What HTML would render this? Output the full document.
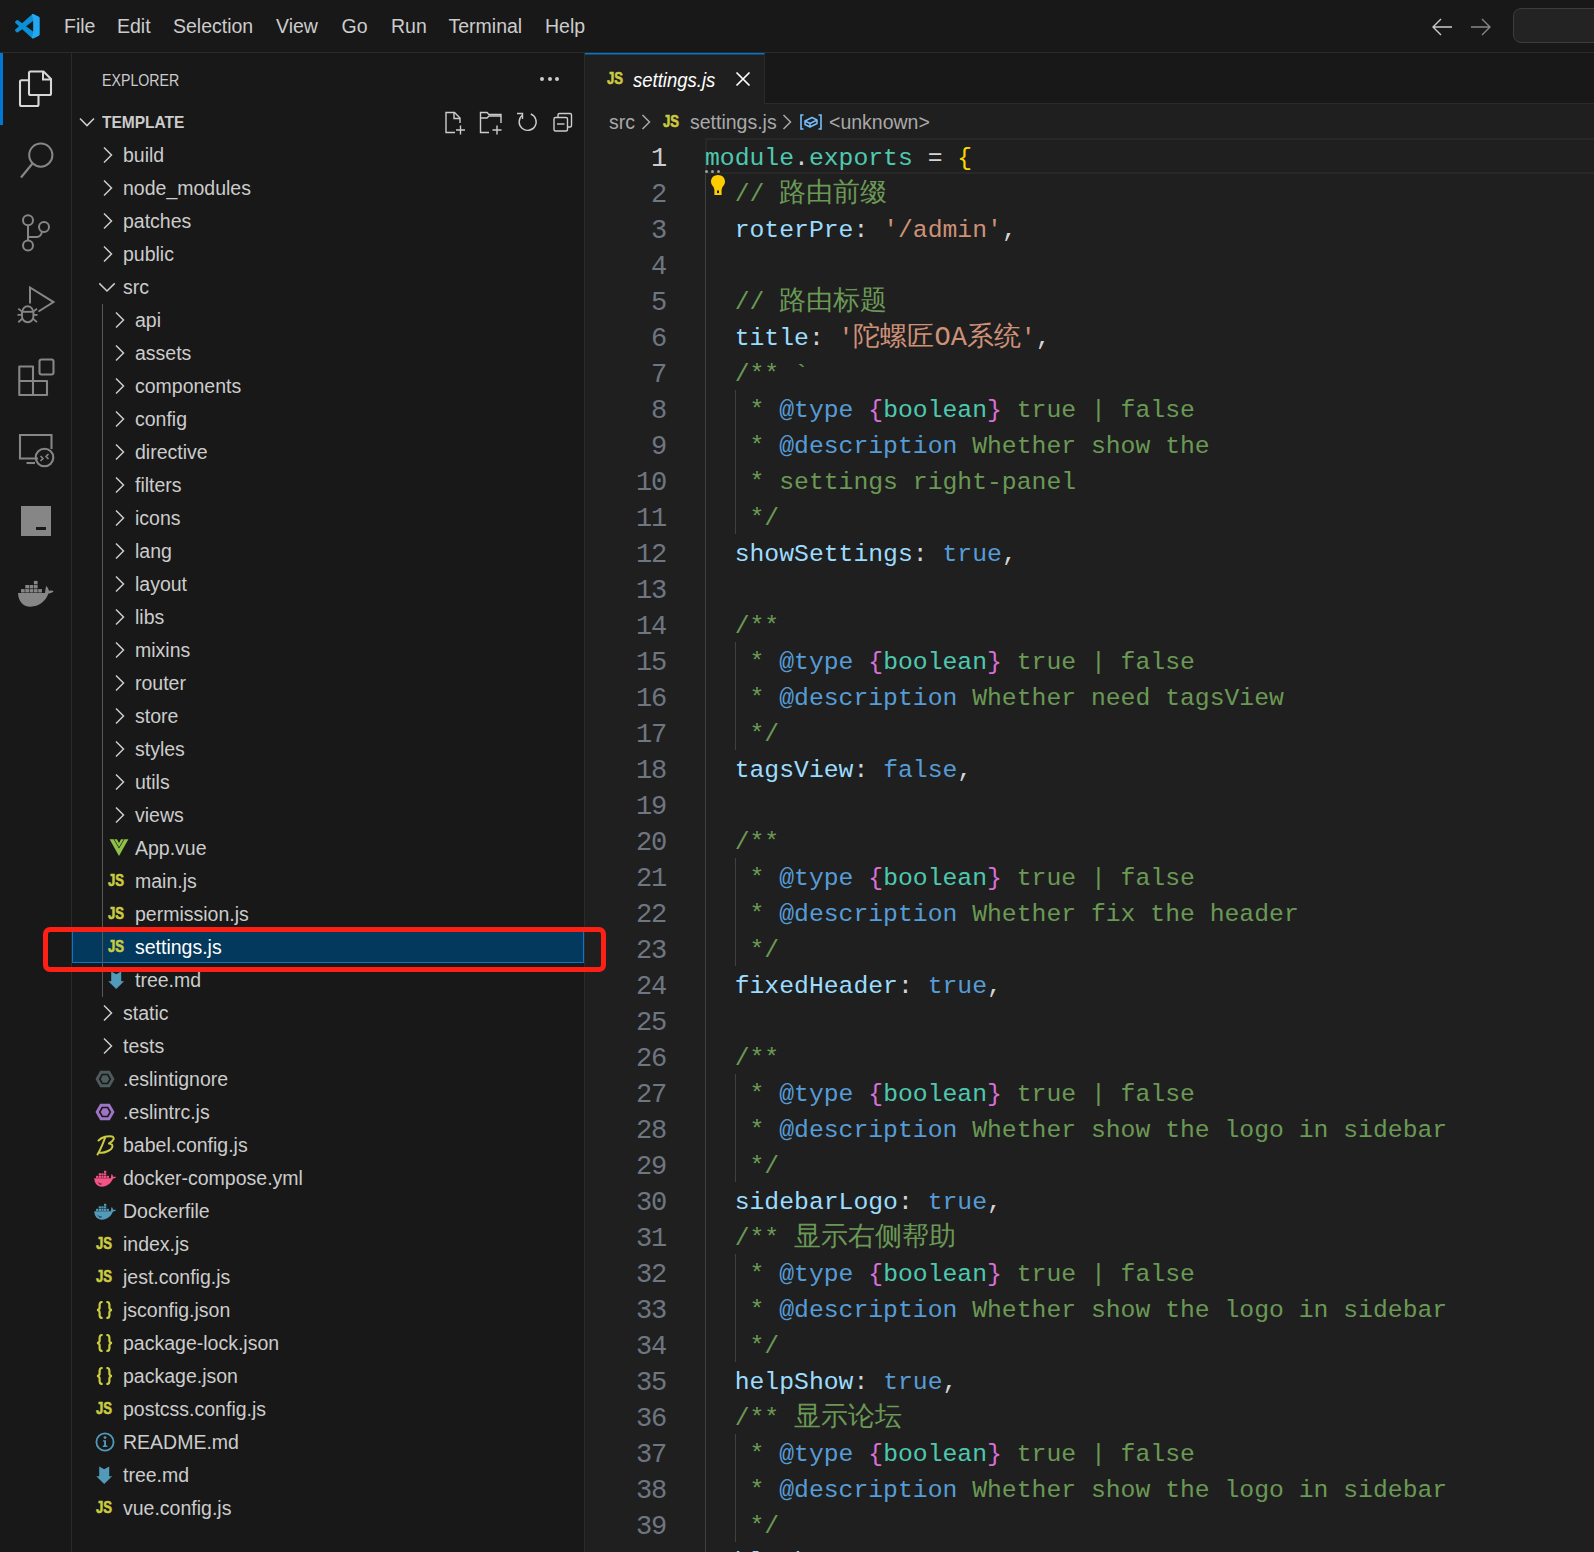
<!DOCTYPE html>
<html><head><meta charset="utf-8"><style>
*{margin:0;padding:0;box-sizing:border-box}
html,body{width:1594px;height:1552px;overflow:hidden;background:#1f1f1f;font-family:"Liberation Sans",sans-serif}
.abs,.ic,.tr,.jsi,.jsoni,.ln,.cl,.ig,.ig2,.sel,.menu{position:absolute}
#title{position:absolute;left:0;top:0;width:1594px;height:53px;background:#181818;border-bottom:1px solid #2b2b2b}
.menu{top:0;height:52px;line-height:52px;font-size:19.5px;color:#cccccc}
#act{position:absolute;left:0;top:53px;width:72px;height:1499px;background:#181818;border-right:1px solid #2b2b2b}
#side{position:absolute;left:72px;top:53px;width:513px;height:1499px;background:#181818;border-right:1px solid #2b2b2b}
#tabs{position:absolute;left:585px;top:53px;width:1009px;height:51px;background:#181818;border-bottom:1px solid #2b2b2b}
.tr{height:33px;line-height:33px;font-size:19.5px;color:#cccccc;white-space:nowrap}
.sel{left:72px;width:512px;height:33px;background:#04395e;border:1px solid #0078d4}
.sel-t{color:#ffffff}
.jsi{font-family:"Liberation Sans",sans-serif;font-weight:bold;font-size:16px;line-height:20px;color:#cbcb41;letter-spacing:0px;-webkit-text-stroke:0.6px #cbcb41;transform:scaleX(0.82);transform-origin:0 0}
.jsoni{font-family:"Liberation Mono",monospace;font-weight:bold;font-size:17px;line-height:22px;color:#cbcb41;letter-spacing:-2px}
.ln{left:600px;width:66px;text-align:right;height:36px;line-height:36px;font-family:"Liberation Mono",monospace;font-size:27px;letter-spacing:-1.2px;color:#6e7681}
.ln.act{color:#cccccc}
.cl{left:705px;height:36px;line-height:36px;font-family:"Liberation Mono",monospace;font-size:24.74px;white-space:pre;color:#d4d4d4}
.cl span{white-space:pre}
.v{color:#9cdcfe}.s{color:#ce9178}.c{color:#6a9955}.k{color:#569cd6}.t{color:#4ec9b0}.p{color:#d4d4d4}.y{color:#ffd700}.o{color:#da70d6}
.cj{color:#6a9955;font-size:27px}.sj{color:#ce9178;font-size:27px}
.ig{width:1px;background:#404040}
.ig2{width:1px;background:#404040}

.bc{color:#a9a9a9}

</style></head><body>
<div id="title"></div>
<svg class="ic" style="left:15px;top:14px" width="24.5" height="24.5" viewBox="0 0 100 100">
 <path d="M96.5 10.8 L75.9 0.9 C73.5 -0.3 70.7 0.2 68.8 2.1 L29.3 38.1 L12.1 25.1 C10.5 23.9 8.3 24 6.8 25.3 L1.3 30.3 C-0.5 32 -0.5 34.8 1.3 36.4 L16.2 50 L1.3 63.6 C-0.5 65.2 -0.5 68 1.3 69.7 L6.8 74.7 C8.3 76 10.5 76.1 12.1 74.9 L29.3 61.9 L68.8 97.9 C70.7 99.8 73.5 100.3 75.9 99.1 L96.5 89.2 C98.7 88.2 100 86 100 83.6 V16.4 C100 14 98.7 11.8 96.5 10.8 Z M75 72.7 L45 50 L75 27.3 Z" fill="#0a8fd8"/>
 <path d="M96.5 10.8 L75.9 0.9 C73.5 -0.3 70.7 0.2 68.8 2.1 L75 27.3 V72.7 L68.8 97.9 C70.7 99.8 73.5 100.3 75.9 99.1 L96.5 89.2 C98.7 88.2 100 86 100 83.6 V16.4 C100 14 98.7 11.8 96.5 10.8 Z" fill="#24a8f0"/>
</svg>
<div class="menu" style="left:64px">File</div>
<div class="menu" style="left:117px">Edit</div>
<div class="menu" style="left:173px">Selection</div>
<div class="menu" style="left:276px">View</div>
<div class="menu" style="left:341.5px">Go</div>
<div class="menu" style="left:391px">Run</div>
<div class="menu" style="left:448.5px">Terminal</div>
<div class="menu" style="left:545px">Help</div>
<!-- nav arrows -->
<svg class="ic" style="left:1430px;top:16px" width="24" height="22" viewBox="0 0 24 22">
 <path d="M11 3 L3 11 L11 19 M3 11 L22 11" fill="none" stroke="#cccccc" stroke-width="1.35"/></svg>
<svg class="ic" style="left:1469px;top:16px" width="24" height="22" viewBox="0 0 24 22">
 <path d="M13 3 L21 11 L13 19 M21 11 L2 11" fill="none" stroke="#868686" stroke-width="1.35"/></svg>
<div class="abs" style="left:1513px;top:8px;width:120px;height:35px;border:1px solid #3c3c3c;border-radius:8px;background:#232323"></div>

<div id="act"></div>
<div class="abs" style="left:0;top:53px;width:3px;height:72px;background:#0078d4"></div>
<!-- explorer icon -->
<svg class="ic" style="left:17px;top:69px" width="38" height="40" viewBox="0 0 38 40">
 <path d="M12 4 Q12 2.5 13.5 2.5 L26.5 2.5 L34 10 L34 24.5 Q34 26 32.5 26 L13.5 26 Q12 26 12 24.5 Z" fill="none" stroke="#d7d7d7" stroke-width="2.1" stroke-linejoin="round"/>
 <path d="M26 2.5 L26 10.5 L34 10.5" fill="none" stroke="#d7d7d7" stroke-width="2"/>
 <path d="M12 11.2 L4.5 11.2 Q3 11.2 3 12.7 L3 35.5 Q3 37 4.5 37 L20 37 Q21.5 37 21.5 35.5 L21.5 26" fill="none" stroke="#d7d7d7" stroke-width="2.1" stroke-linejoin="round"/>
</svg>
<!-- search -->
<svg class="ic" style="left:16px;top:138px" width="40" height="44" viewBox="0 0 40 44">
 <circle cx="24.8" cy="17.1" r="11.6" fill="none" stroke="#868686" stroke-width="2"/>
 <path d="M16.5 25.5 L5 39.5" stroke="#868686" stroke-width="2.2" stroke-linecap="butt"/>
</svg>
<!-- source control -->
<svg class="ic" style="left:16px;top:208px" width="40" height="48" viewBox="0 0 40 48">
 <circle cx="12" cy="12.2" r="5" fill="none" stroke="#868686" stroke-width="2"/>
 <circle cx="28" cy="19" r="5" fill="none" stroke="#868686" stroke-width="2"/>
 <circle cx="12" cy="37.4" r="5" fill="none" stroke="#868686" stroke-width="2"/>
 <path d="M12 17.2 L12 32.4 M12 29 L21 29 Q24.5 29 26 24" fill="none" stroke="#868686" stroke-width="2"/>
</svg>
<!-- run & debug -->
<svg class="ic" style="left:14px;top:282px" width="44" height="46" viewBox="0 0 44 46">
 <path d="M16 21.4 L16 5.5 L39.5 20.1 L24.5 29.5" fill="none" stroke="#868686" stroke-width="2" stroke-linejoin="miter"/>
 <path d="M8.4 29.6 A5.3 5.3 0 0 1 19 29.6" fill="none" stroke="#868686" stroke-width="1.9"/>
 <path d="M7.4 29.8 L20 29.8" stroke="#868686" stroke-width="1.9"/>
 <path d="M8 30 L8 34.5 A5.7 5.7 0 0 0 19.4 34.5 L19.4 30" fill="none" stroke="#868686" stroke-width="1.9"/>
 <path d="M3.5 32.8 L7.5 32.8 M20 32.8 L23.5 32.8 M4.3 26.7 L8.2 29.6 M23 26.7 L19.2 29.6 M4.3 40.2 L8.2 36.8 M23 40.2 L19.2 36.8" stroke="#868686" stroke-width="1.8"/>
</svg>
<!-- extensions -->
<svg class="ic" style="left:14px;top:354px" width="44" height="46" viewBox="0 0 44 46">
 <path d="M5.3 12.5 L19 12.5 L19 27 L33 27 L33 41 L5.3 41 Z M5.3 27 L19 27 L19 41" fill="none" stroke="#868686" stroke-width="2.1" stroke-linejoin="round"/>
 <rect x="25.5" y="5.5" width="14" height="15" rx="2" fill="none" stroke="#868686" stroke-width="2.1"/>
</svg>
<!-- remote explorer -->
<svg class="ic" style="left:14px;top:428px" width="44" height="46" viewBox="0 0 44 46">
 <path d="M24 30.5 L6 30.5 L6 7 L37.5 7 L37.5 21" fill="none" stroke="#868686" stroke-width="2.1"/>
 <path d="M12.5 35 L21 35" stroke="#868686" stroke-width="2.1"/>
 <circle cx="30.5" cy="29.5" r="8.8" fill="none" stroke="#868686" stroke-width="2.1"/>
 <path d="M26.5 28 L29 30.5 L26.5 33 M34.5 26 L32 28.5 L34.5 31" fill="none" stroke="#868686" stroke-width="1.6"/>
</svg>
<!-- square terminal thing -->
<div class="abs" style="left:21px;top:506px;width:30px;height:30px;background:#868686"></div>
<div class="abs" style="left:36px;top:527px;width:10px;height:3px;background:#181818"></div>
<!-- docker -->
<svg class="ic" style="left:16px;top:578px" width="40" height="32" viewBox="0 0 40 32">
 <path d="M2 15 L29 15 C29.3 12.5 29.5 10.2 30.3 8 C31.6 9 32.6 11 33 13 C34.6 12.3 36.5 12.4 37.8 13.1 C36.8 14.6 34.6 15.5 32.5 15.6 C29.5 23.5 23 28.7 14.5 28.7 C6.5 28.7 2.4 23 2 15 Z" fill="#868686"/>
 <rect x="5" y="11.1" width="3.7" height="3.4" fill="#868686"/><rect x="9.3" y="11.1" width="3.7" height="3.4" fill="#868686"/><rect x="13.6" y="11.1" width="3.7" height="3.4" fill="#868686"/><rect x="17.9" y="11.1" width="3.7" height="3.4" fill="#868686"/><rect x="22.2" y="11.1" width="3.7" height="3.4" fill="#868686"/><rect x="9.3" y="7" width="3.7" height="3.4" fill="#868686"/><rect x="13.6" y="7" width="3.7" height="3.4" fill="#868686"/><rect x="17.9" y="7" width="3.7" height="3.4" fill="#868686"/><rect x="17.9" y="2.9" width="3.7" height="3.4" fill="#868686"/>
</svg>

<div id="side"></div>
<div class="tr" style="left:102px;top:64px;font-size:17px;color:#cccccc;transform:scaleX(0.835);transform-origin:0 0">EXPLORER</div>
<div class="abs" style="left:540px;top:77px;width:4px;height:4px;border-radius:2px;background:#cccccc"></div>
<div class="abs" style="left:547.5px;top:77px;width:4px;height:4px;border-radius:2px;background:#cccccc"></div>
<div class="abs" style="left:555px;top:77px;width:4px;height:4px;border-radius:2px;background:#cccccc"></div>
<!-- TEMPLATE header -->
<svg class="ic" style="left:77px;top:112px" width="20" height="20" viewBox="0 0 20 20"><path d="M3 6.5 L10 13.5 L17 6.5" fill="none" stroke="#cccccc" stroke-width="1.6"/></svg>
<div class="tr" style="left:102px;top:106px;font-size:16.5px;font-weight:bold;color:#cccccc;transform:scaleX(0.94);transform-origin:0 0">TEMPLATE</div>
<!-- new file -->
<svg class="ic" style="left:443px;top:110px" width="26" height="26" viewBox="0 0 26 26">
 <path d="M12 22.5 L3 22.5 L3 2.5 L11.5 2.5 L17 8 L17 13" fill="none" stroke="#cccccc" stroke-width="1.4"/>
 <path d="M11 2.5 L11 8.5 L17 8.5" fill="none" stroke="#cccccc" stroke-width="1.4"/>
 <path d="M17.5 15.5 L17.5 24.5 M13 20 L22 20" stroke="#cccccc" stroke-width="1.4"/>
</svg>
<!-- new folder -->
<svg class="ic" style="left:478px;top:110px" width="26" height="26" viewBox="0 0 26 26">
 <path d="M11 22.5 L2.5 22.5 L2.5 2.5 L9 2.5 L11 4.5 L23 4.5 L23 13" fill="none" stroke="#cccccc" stroke-width="1.4"/>
 <path d="M2.5 8 L9 8 L11 6 L23 6" fill="none" stroke="#cccccc" stroke-width="1.4"/>
 <path d="M19 15.5 L19 24.5 M14.5 20 L23.5 20" stroke="#cccccc" stroke-width="1.4"/>
</svg>
<!-- refresh -->
<svg class="ic" style="left:514px;top:110px" width="24" height="24" viewBox="0 0 24 24">
 <path d="M8.3 5.3 A8.5 8.5 0 1 0 16.8 4" fill="none" stroke="#cccccc" stroke-width="1.4" transform="rotate(0 12 12)"/>
 <path d="M3 3.5 L8.5 3.5 L8.5 9" fill="none" stroke="#cccccc" stroke-width="1.4"/>
</svg>
<!-- collapse -->
<svg class="ic" style="left:551px;top:110px" width="24" height="24" viewBox="0 0 24 24">
 <path d="M7 7 L7 5 Q7 3.5 8.5 3.5 L19 3.5 Q20.5 3.5 20.5 5 L20.5 15.5 Q20.5 17 19 17 L17 17" fill="none" stroke="#cccccc" stroke-width="1.4"/>
 <rect x="3" y="7.5" width="13.5" height="13.5" rx="1.5" fill="none" stroke="#cccccc" stroke-width="1.4"/>
 <path d="M6 14 L13.5 14" stroke="#cccccc" stroke-width="1.4"/>
</svg>
<svg class="ic" style="left:98px;top:145.0px" width="20" height="20" viewBox="0 0 20 20"><path d="M6 2.5 L13.5 10 L6 17.5" fill="none" stroke="#cccccc" stroke-width="1.5"/></svg>
<div class="tr" style="left:123px;top:138.5px">build</div>
<svg class="ic" style="left:98px;top:178.0px" width="20" height="20" viewBox="0 0 20 20"><path d="M6 2.5 L13.5 10 L6 17.5" fill="none" stroke="#cccccc" stroke-width="1.5"/></svg>
<div class="tr" style="left:123px;top:171.5px">node_modules</div>
<svg class="ic" style="left:98px;top:211.0px" width="20" height="20" viewBox="0 0 20 20"><path d="M6 2.5 L13.5 10 L6 17.5" fill="none" stroke="#cccccc" stroke-width="1.5"/></svg>
<div class="tr" style="left:123px;top:204.5px">patches</div>
<svg class="ic" style="left:98px;top:244.0px" width="20" height="20" viewBox="0 0 20 20"><path d="M6 2.5 L13.5 10 L6 17.5" fill="none" stroke="#cccccc" stroke-width="1.5"/></svg>
<div class="tr" style="left:123px;top:237.5px">public</div>
<svg class="ic" style="left:96.5px;top:277.0px" width="20" height="20" viewBox="0 0 20 20"><path d="M2.3 6.4 L10 14 L17.7 6.4" fill="none" stroke="#cccccc" stroke-width="1.5"/></svg>
<div class="tr" style="left:123px;top:270.5px">src</div>
<svg class="ic" style="left:110px;top:310.0px" width="20" height="20" viewBox="0 0 20 20"><path d="M6 2.5 L13.5 10 L6 17.5" fill="none" stroke="#cccccc" stroke-width="1.5"/></svg>
<div class="tr" style="left:135px;top:303.5px">api</div>
<svg class="ic" style="left:110px;top:343.0px" width="20" height="20" viewBox="0 0 20 20"><path d="M6 2.5 L13.5 10 L6 17.5" fill="none" stroke="#cccccc" stroke-width="1.5"/></svg>
<div class="tr" style="left:135px;top:336.5px">assets</div>
<svg class="ic" style="left:110px;top:376.0px" width="20" height="20" viewBox="0 0 20 20"><path d="M6 2.5 L13.5 10 L6 17.5" fill="none" stroke="#cccccc" stroke-width="1.5"/></svg>
<div class="tr" style="left:135px;top:369.5px">components</div>
<svg class="ic" style="left:110px;top:409.0px" width="20" height="20" viewBox="0 0 20 20"><path d="M6 2.5 L13.5 10 L6 17.5" fill="none" stroke="#cccccc" stroke-width="1.5"/></svg>
<div class="tr" style="left:135px;top:402.5px">config</div>
<svg class="ic" style="left:110px;top:442.0px" width="20" height="20" viewBox="0 0 20 20"><path d="M6 2.5 L13.5 10 L6 17.5" fill="none" stroke="#cccccc" stroke-width="1.5"/></svg>
<div class="tr" style="left:135px;top:435.5px">directive</div>
<svg class="ic" style="left:110px;top:475.0px" width="20" height="20" viewBox="0 0 20 20"><path d="M6 2.5 L13.5 10 L6 17.5" fill="none" stroke="#cccccc" stroke-width="1.5"/></svg>
<div class="tr" style="left:135px;top:468.5px">filters</div>
<svg class="ic" style="left:110px;top:508.0px" width="20" height="20" viewBox="0 0 20 20"><path d="M6 2.5 L13.5 10 L6 17.5" fill="none" stroke="#cccccc" stroke-width="1.5"/></svg>
<div class="tr" style="left:135px;top:501.5px">icons</div>
<svg class="ic" style="left:110px;top:541.0px" width="20" height="20" viewBox="0 0 20 20"><path d="M6 2.5 L13.5 10 L6 17.5" fill="none" stroke="#cccccc" stroke-width="1.5"/></svg>
<div class="tr" style="left:135px;top:534.5px">lang</div>
<svg class="ic" style="left:110px;top:574.0px" width="20" height="20" viewBox="0 0 20 20"><path d="M6 2.5 L13.5 10 L6 17.5" fill="none" stroke="#cccccc" stroke-width="1.5"/></svg>
<div class="tr" style="left:135px;top:567.5px">layout</div>
<svg class="ic" style="left:110px;top:607.0px" width="20" height="20" viewBox="0 0 20 20"><path d="M6 2.5 L13.5 10 L6 17.5" fill="none" stroke="#cccccc" stroke-width="1.5"/></svg>
<div class="tr" style="left:135px;top:600.5px">libs</div>
<svg class="ic" style="left:110px;top:640.0px" width="20" height="20" viewBox="0 0 20 20"><path d="M6 2.5 L13.5 10 L6 17.5" fill="none" stroke="#cccccc" stroke-width="1.5"/></svg>
<div class="tr" style="left:135px;top:633.5px">mixins</div>
<svg class="ic" style="left:110px;top:673.0px" width="20" height="20" viewBox="0 0 20 20"><path d="M6 2.5 L13.5 10 L6 17.5" fill="none" stroke="#cccccc" stroke-width="1.5"/></svg>
<div class="tr" style="left:135px;top:666.5px">router</div>
<svg class="ic" style="left:110px;top:706.0px" width="20" height="20" viewBox="0 0 20 20"><path d="M6 2.5 L13.5 10 L6 17.5" fill="none" stroke="#cccccc" stroke-width="1.5"/></svg>
<div class="tr" style="left:135px;top:699.5px">store</div>
<svg class="ic" style="left:110px;top:739.0px" width="20" height="20" viewBox="0 0 20 20"><path d="M6 2.5 L13.5 10 L6 17.5" fill="none" stroke="#cccccc" stroke-width="1.5"/></svg>
<div class="tr" style="left:135px;top:732.5px">styles</div>
<svg class="ic" style="left:110px;top:772.0px" width="20" height="20" viewBox="0 0 20 20"><path d="M6 2.5 L13.5 10 L6 17.5" fill="none" stroke="#cccccc" stroke-width="1.5"/></svg>
<div class="tr" style="left:135px;top:765.5px">utils</div>
<svg class="ic" style="left:110px;top:805.0px" width="20" height="20" viewBox="0 0 20 20"><path d="M6 2.5 L13.5 10 L6 17.5" fill="none" stroke="#cccccc" stroke-width="1.5"/></svg>
<div class="tr" style="left:135px;top:798.5px">views</div>
<svg class="ic" style="left:109px;top:837.0px" width="20" height="20" viewBox="0 0 20 20"><path d="M0.6 2.3 L4.6 2.3 L10 11.6 L15.4 2.3 L19.4 2.3 L10 19 Z" fill="#8dc149"/><path d="M5.3 2.3 L8 2.3 L10 5.9 L12 2.3 L14.7 2.3 L10 10.2 Z" fill="#8dc149"/></svg>
<div class="tr" style="left:135px;top:831.5px">App.vue</div>
<div class="jsi" style="left:108px;top:871.0px">JS</div>
<div class="tr" style="left:135px;top:864.5px">main.js</div>
<div class="jsi" style="left:108px;top:904.0px">JS</div>
<div class="tr" style="left:135px;top:897.5px">permission.js</div>
<div class="sel" style="top:930.0px"></div>
<div class="jsi" style="left:108px;top:937.0px">JS</div>
<div class="tr sel-t" style="left:135px;top:930.5px">settings.js</div>
<svg class="ic" style="left:108px;top:970.0px" width="20" height="20" viewBox="0 0 20 20"><path d="M3.2 1.5 L8.2 4.2 L13.2 1.5 L13.2 11.3 L16.1 11.3 L8.2 19 L0.3 11.3 L3.2 11.3 Z" fill="#519aba"/></svg>
<div class="tr" style="left:135px;top:963.5px">tree.md</div>
<svg class="ic" style="left:98px;top:1003.0px" width="20" height="20" viewBox="0 0 20 20"><path d="M6 2.5 L13.5 10 L6 17.5" fill="none" stroke="#cccccc" stroke-width="1.5"/></svg>
<div class="tr" style="left:123px;top:996.5px">static</div>
<svg class="ic" style="left:98px;top:1036.0px" width="20" height="20" viewBox="0 0 20 20"><path d="M6 2.5 L13.5 10 L6 17.5" fill="none" stroke="#cccccc" stroke-width="1.5"/></svg>
<div class="tr" style="left:123px;top:1029.5px">tests</div>
<svg class="ic" style="left:94.5px;top:1068.5px" width="20" height="20" viewBox="0 0 20 20"><path d="M5.2 1.8 L14.8 1.8 L19.5 10 L14.8 18.2 L5.2 18.2 L0.5 10 Z" fill="#4d5a5e"/><path d="M7.3 5.5 L12.7 5.5 L15.3 10 L12.7 14.5 L7.3 14.5 L4.7 10 Z" fill="none" stroke="#181818" stroke-width="1.6"/></svg>
<div class="tr" style="left:123px;top:1062.5px">.eslintignore</div>
<svg class="ic" style="left:94.5px;top:1101.5px" width="20" height="20" viewBox="0 0 20 20"><path d="M5.2 1.8 L14.8 1.8 L19.5 10 L14.8 18.2 L5.2 18.2 L0.5 10 Z" fill="#a074c4"/><path d="M7.3 5.5 L12.7 5.5 L15.3 10 L12.7 14.5 L7.3 14.5 L4.7 10 Z" fill="none" stroke="#181818" stroke-width="1.6"/></svg>
<div class="tr" style="left:123px;top:1095.5px">.eslintrc.js</div>
<svg class="ic" style="left:96px;top:1134.0px" width="20" height="22" viewBox="0 0 20 22"><path d="M2.5 6.5 C6 3 12 1.5 16 2.5 C19 3.5 18 7 13 9.5 C18 10 17.5 14.5 12 17 C9 18.5 5 19 3 18.5 M9 4 C7 9 5 15 1.5 20.5" fill="none" stroke="#cbcb41" stroke-width="2" stroke-linecap="round" stroke-linejoin="round"/></svg>
<div class="tr" style="left:123px;top:1128.5px">babel.config.js</div>
<svg class="ic" style="left:92.8px;top:1168.8px" width="24.6" height="19.7" viewBox="0 0 40 32"><path d="M2 15 L29 15 C29.3 12.5 29.5 10.2 30.3 8 C31.6 9 32.6 11 33 13 C34.6 12.3 36.5 12.4 37.8 13.1 C36.8 14.6 34.6 15.5 32.5 15.6 C29.5 23.5 23 28.7 14.5 28.7 C6.5 28.7 2.4 23 2 15 Z" fill="#f55385"/><rect x="5" y="11.1" width="3.7" height="3.4" fill="#f55385"/><rect x="9.3" y="11.1" width="3.7" height="3.4" fill="#f55385"/><rect x="13.6" y="11.1" width="3.7" height="3.4" fill="#f55385"/><rect x="17.9" y="11.1" width="3.7" height="3.4" fill="#f55385"/><rect x="22.2" y="11.1" width="3.7" height="3.4" fill="#f55385"/><rect x="9.3" y="7" width="3.7" height="3.4" fill="#f55385"/><rect x="13.6" y="7" width="3.7" height="3.4" fill="#f55385"/><rect x="17.9" y="7" width="3.7" height="3.4" fill="#f55385"/><rect x="17.9" y="2.9" width="3.7" height="3.4" fill="#f55385"/><path d="M8.5 22 C10 24.5 12 25 14 24.2" stroke="#181818" stroke-width="1.6" fill="none"/></svg>
<div class="tr" style="left:123px;top:1161.5px">docker-compose.yml</div>
<svg class="ic" style="left:92.8px;top:1201.8px" width="24.6" height="19.7" viewBox="0 0 40 32"><path d="M2 15 L29 15 C29.3 12.5 29.5 10.2 30.3 8 C31.6 9 32.6 11 33 13 C34.6 12.3 36.5 12.4 37.8 13.1 C36.8 14.6 34.6 15.5 32.5 15.6 C29.5 23.5 23 28.7 14.5 28.7 C6.5 28.7 2.4 23 2 15 Z" fill="#519aba"/><rect x="5" y="11.1" width="3.7" height="3.4" fill="#519aba"/><rect x="9.3" y="11.1" width="3.7" height="3.4" fill="#519aba"/><rect x="13.6" y="11.1" width="3.7" height="3.4" fill="#519aba"/><rect x="17.9" y="11.1" width="3.7" height="3.4" fill="#519aba"/><rect x="22.2" y="11.1" width="3.7" height="3.4" fill="#519aba"/><rect x="9.3" y="7" width="3.7" height="3.4" fill="#519aba"/><rect x="13.6" y="7" width="3.7" height="3.4" fill="#519aba"/><rect x="17.9" y="7" width="3.7" height="3.4" fill="#519aba"/><rect x="17.9" y="2.9" width="3.7" height="3.4" fill="#519aba"/><path d="M8.5 22 C10 24.5 12 25 14 24.2" stroke="#181818" stroke-width="1.6" fill="none"/></svg>
<div class="tr" style="left:123px;top:1194.5px">Dockerfile</div>
<div class="jsi" style="left:96px;top:1234.0px">JS</div>
<div class="tr" style="left:123px;top:1227.5px">index.js</div>
<div class="jsi" style="left:96px;top:1267.0px">JS</div>
<div class="tr" style="left:123px;top:1260.5px">jest.config.js</div>
<svg class="ic" style="left:96px;top:1301.0px" width="18" height="18" viewBox="0 0 18 18"><path d="M6.6 0.9 Q3.6 0.9 3.6 3.4 L3.6 6.8 Q3.6 8.4 1.2 9 Q3.6 9.6 3.6 11.2 L3.6 14.6 Q3.6 17.1 6.6 17.1 M10.4 0.9 Q13.4 0.9 13.4 3.4 L13.4 6.8 Q13.4 8.4 15.8 9 Q13.4 9.6 13.4 11.2 L13.4 14.6 Q13.4 17.1 10.4 17.1" fill="none" stroke="#cbcb41" stroke-width="2.2"/></svg>
<div class="tr" style="left:123px;top:1293.5px">jsconfig.json</div>
<svg class="ic" style="left:96px;top:1334.0px" width="18" height="18" viewBox="0 0 18 18"><path d="M6.6 0.9 Q3.6 0.9 3.6 3.4 L3.6 6.8 Q3.6 8.4 1.2 9 Q3.6 9.6 3.6 11.2 L3.6 14.6 Q3.6 17.1 6.6 17.1 M10.4 0.9 Q13.4 0.9 13.4 3.4 L13.4 6.8 Q13.4 8.4 15.8 9 Q13.4 9.6 13.4 11.2 L13.4 14.6 Q13.4 17.1 10.4 17.1" fill="none" stroke="#cbcb41" stroke-width="2.2"/></svg>
<div class="tr" style="left:123px;top:1326.5px">package-lock.json</div>
<svg class="ic" style="left:96px;top:1367.0px" width="18" height="18" viewBox="0 0 18 18"><path d="M6.6 0.9 Q3.6 0.9 3.6 3.4 L3.6 6.8 Q3.6 8.4 1.2 9 Q3.6 9.6 3.6 11.2 L3.6 14.6 Q3.6 17.1 6.6 17.1 M10.4 0.9 Q13.4 0.9 13.4 3.4 L13.4 6.8 Q13.4 8.4 15.8 9 Q13.4 9.6 13.4 11.2 L13.4 14.6 Q13.4 17.1 10.4 17.1" fill="none" stroke="#cbcb41" stroke-width="2.2"/></svg>
<div class="tr" style="left:123px;top:1359.5px">package.json</div>
<div class="jsi" style="left:96px;top:1399.0px">JS</div>
<div class="tr" style="left:123px;top:1392.5px">postcss.config.js</div>
<svg class="ic" style="left:95px;top:1432.0px" width="20" height="20" viewBox="0 0 20 20"><circle cx="10" cy="10" r="8.6" fill="none" stroke="#519aba" stroke-width="1.8"/><circle cx="10" cy="5.6" r="1.4" fill="#519aba"/><path d="M8 8.2 L11 8.2 L11 13.6 L12.3 13.6 L12.3 15 L7.8 15 L7.8 13.6 L9.1 13.6 L9.1 9.6 L8 9.6 Z" fill="#519aba"/></svg>
<div class="tr" style="left:123px;top:1425.5px">README.md</div>
<svg class="ic" style="left:96px;top:1465.0px" width="20" height="20" viewBox="0 0 20 20"><path d="M3.2 1.5 L8.2 4.2 L13.2 1.5 L13.2 11.3 L16.1 11.3 L8.2 19 L0.3 11.3 L3.2 11.3 Z" fill="#519aba"/></svg>
<div class="tr" style="left:123px;top:1458.5px">tree.md</div>
<div class="jsi" style="left:96px;top:1498.0px">JS</div>
<div class="tr" style="left:123px;top:1491.5px">vue.config.js</div>
<div class="ig" style="left:102px;top:304px;height:693px;background:#585858"></div>

<div id="tabs"></div>
<div class="abs" style="left:585px;top:53px;width:180px;height:51px;background:#1f1f1f;border-right:1px solid #2b2b2b;border-top:1px solid #0078d4;box-shadow:inset 0 1px 0 rgba(0,120,212,0.45)"></div>
<div class="jsi" style="left:607px;top:69px">JS</div>
<div class="tr" style="left:633px;top:64px;font-style:italic;color:#ffffff;transform:scaleX(0.95);transform-origin:0 0">settings.js</div>
<svg class="ic" style="left:733px;top:69px" width="20" height="20" viewBox="0 0 20 20"><path d="M3.5 3.5 L16.5 16.5 M16.5 3.5 L3.5 16.5" stroke="#ffffff" stroke-width="1.7"/></svg>
<!-- breadcrumbs -->
<div class="tr bc" style="left:609px;top:106px">src</div>
<svg class="ic" style="left:636px;top:112px" width="20" height="20" viewBox="0 0 20 20"><path d="M6.5 3 L13.5 10 L6.5 17" fill="none" stroke="#a9a9a9" stroke-width="1.5"/></svg>
<div class="jsi" style="left:663px;top:112px">JS</div>
<div class="tr bc" style="left:690px;top:106px">settings.js</div>
<svg class="ic" style="left:777px;top:112px" width="20" height="20" viewBox="0 0 20 20"><path d="M6.5 3 L13.5 10 L6.5 17" fill="none" stroke="#a9a9a9" stroke-width="1.5"/></svg>
<svg class="ic" style="left:799px;top:112px" width="24" height="20" viewBox="0 0 24 20">
 <path d="M4.5 3 L2 3 L2 17 L4.5 17 M19.5 3 L22 3 L22 17 L19.5 17" fill="none" stroke="#75beff" stroke-width="1.6"/>
 <path d="M6 9 L13 5.5 L18 8 L18 11.5 L11 15 L6 12.5 Z M6 9 L11 11.5 L18 8 M11 11.5 L11 15" fill="none" stroke="#75beff" stroke-width="1.5" stroke-linejoin="round"/>
</svg>
<div class="tr bc" style="left:829px;top:106px">&lt;unknown&gt;</div>
<!-- current line box -->
<div class="abs" style="left:705px;top:138px;width:900px;height:36px;border:2px solid #282828;border-right:none"></div>
<div class="abs" style="left:705px;top:170px;width:3px;height:3px;border-radius:1.5px;background:#a0a0a0"></div>
<div class="abs" style="left:711px;top:170px;width:3px;height:3px;border-radius:1.5px;background:#a0a0a0"></div>
<div class="abs" style="left:717px;top:170px;width:3px;height:3px;border-radius:1.5px;background:#a0a0a0"></div>
<div class="ln act" style="top:141px">1</div>
<div class="cl" style="top:139.5px"><span class="t">module</span><span class="p">.</span><span class="t">exports</span><span class="p"> = </span><span class="y">{</span></div>
<div class="ln" style="top:177px">2</div>
<div class="cl" style="top:175.5px"><span class="c">  // </span><span class="cj">路由前缀</span></div>
<div class="ln" style="top:213px">3</div>
<div class="cl" style="top:211.5px"><span class="p">  </span><span class="v">roterPre</span><span class="p">: </span><span class="s">&#x27;/admin&#x27;</span><span class="p">,</span></div>
<div class="ln" style="top:249px">4</div>
<div class="cl" style="top:247.5px"></div>
<div class="ln" style="top:285px">5</div>
<div class="cl" style="top:283.5px"><span class="c">  // </span><span class="cj">路由标题</span></div>
<div class="ln" style="top:321px">6</div>
<div class="cl" style="top:319.5px"><span class="p">  </span><span class="v">title</span><span class="p">: </span><span class="s">&#x27;</span><span class="sj">陀螺匠OA系统</span><span class="s">&#x27;</span><span class="p">,</span></div>
<div class="ln" style="top:357px">7</div>
<div class="cl" style="top:355.5px"><span class="c">  /** `</span></div>
<div class="ln" style="top:393px">8</div>
<div class="cl" style="top:391.5px"><span class="c">   * </span><span class="k">@type</span><span class="c"> </span><span class="o">{</span><span class="t">boolean</span><span class="o">}</span><span class="c"> true | false</span></div>
<div class="ln" style="top:429px">9</div>
<div class="cl" style="top:427.5px"><span class="c">   * </span><span class="k">@description</span><span class="c"> Whether show the</span></div>
<div class="ln" style="top:465px">10</div>
<div class="cl" style="top:463.5px"><span class="c">   * settings right-panel</span></div>
<div class="ln" style="top:501px">11</div>
<div class="cl" style="top:499.5px"><span class="c">   */</span></div>
<div class="ln" style="top:537px">12</div>
<div class="cl" style="top:535.5px"><span class="p">  </span><span class="v">showSettings</span><span class="p">: </span><span class="k">true</span><span class="p">,</span></div>
<div class="ln" style="top:573px">13</div>
<div class="cl" style="top:571.5px"></div>
<div class="ln" style="top:609px">14</div>
<div class="cl" style="top:607.5px"><span class="c">  /**</span></div>
<div class="ln" style="top:645px">15</div>
<div class="cl" style="top:643.5px"><span class="c">   * </span><span class="k">@type</span><span class="c"> </span><span class="o">{</span><span class="t">boolean</span><span class="o">}</span><span class="c"> true | false</span></div>
<div class="ln" style="top:681px">16</div>
<div class="cl" style="top:679.5px"><span class="c">   * </span><span class="k">@description</span><span class="c"> Whether need tagsView</span></div>
<div class="ln" style="top:717px">17</div>
<div class="cl" style="top:715.5px"><span class="c">   */</span></div>
<div class="ln" style="top:753px">18</div>
<div class="cl" style="top:751.5px"><span class="p">  </span><span class="v">tagsView</span><span class="p">: </span><span class="k">false</span><span class="p">,</span></div>
<div class="ln" style="top:789px">19</div>
<div class="cl" style="top:787.5px"></div>
<div class="ln" style="top:825px">20</div>
<div class="cl" style="top:823.5px"><span class="c">  /**</span></div>
<div class="ln" style="top:861px">21</div>
<div class="cl" style="top:859.5px"><span class="c">   * </span><span class="k">@type</span><span class="c"> </span><span class="o">{</span><span class="t">boolean</span><span class="o">}</span><span class="c"> true | false</span></div>
<div class="ln" style="top:897px">22</div>
<div class="cl" style="top:895.5px"><span class="c">   * </span><span class="k">@description</span><span class="c"> Whether fix the header</span></div>
<div class="ln" style="top:933px">23</div>
<div class="cl" style="top:931.5px"><span class="c">   */</span></div>
<div class="ln" style="top:969px">24</div>
<div class="cl" style="top:967.5px"><span class="p">  </span><span class="v">fixedHeader</span><span class="p">: </span><span class="k">true</span><span class="p">,</span></div>
<div class="ln" style="top:1005px">25</div>
<div class="cl" style="top:1003.5px"></div>
<div class="ln" style="top:1041px">26</div>
<div class="cl" style="top:1039.5px"><span class="c">  /**</span></div>
<div class="ln" style="top:1077px">27</div>
<div class="cl" style="top:1075.5px"><span class="c">   * </span><span class="k">@type</span><span class="c"> </span><span class="o">{</span><span class="t">boolean</span><span class="o">}</span><span class="c"> true | false</span></div>
<div class="ln" style="top:1113px">28</div>
<div class="cl" style="top:1111.5px"><span class="c">   * </span><span class="k">@description</span><span class="c"> Whether show the logo in sidebar</span></div>
<div class="ln" style="top:1149px">29</div>
<div class="cl" style="top:1147.5px"><span class="c">   */</span></div>
<div class="ln" style="top:1185px">30</div>
<div class="cl" style="top:1183.5px"><span class="p">  </span><span class="v">sidebarLogo</span><span class="p">: </span><span class="k">true</span><span class="p">,</span></div>
<div class="ln" style="top:1221px">31</div>
<div class="cl" style="top:1219.5px"><span class="c">  /** </span><span class="cj">显示右侧帮助</span></div>
<div class="ln" style="top:1257px">32</div>
<div class="cl" style="top:1255.5px"><span class="c">   * </span><span class="k">@type</span><span class="c"> </span><span class="o">{</span><span class="t">boolean</span><span class="o">}</span><span class="c"> true | false</span></div>
<div class="ln" style="top:1293px">33</div>
<div class="cl" style="top:1291.5px"><span class="c">   * </span><span class="k">@description</span><span class="c"> Whether show the logo in sidebar</span></div>
<div class="ln" style="top:1329px">34</div>
<div class="cl" style="top:1327.5px"><span class="c">   */</span></div>
<div class="ln" style="top:1365px">35</div>
<div class="cl" style="top:1363.5px"><span class="p">  </span><span class="v">helpShow</span><span class="p">: </span><span class="k">true</span><span class="p">,</span></div>
<div class="ln" style="top:1401px">36</div>
<div class="cl" style="top:1399.5px"><span class="c">  /** </span><span class="cj">显示论坛</span></div>
<div class="ln" style="top:1437px">37</div>
<div class="cl" style="top:1435.5px"><span class="c">   * </span><span class="k">@type</span><span class="c"> </span><span class="o">{</span><span class="t">boolean</span><span class="o">}</span><span class="c"> true | false</span></div>
<div class="ln" style="top:1473px">38</div>
<div class="cl" style="top:1471.5px"><span class="c">   * </span><span class="k">@description</span><span class="c"> Whether show the logo in sidebar</span></div>
<div class="ln" style="top:1509px">39</div>
<div class="cl" style="top:1507.5px"><span class="c">   */</span></div>
<div class="ln" style="top:1545px">40</div>
<div class="cl" style="top:1543.5px"><span class="p">  </span><span class="v">blockUser</span><span class="p">: </span><span class="k">true</span><span class="p">,</span></div>
<div class="ig" style="left:705px;top:174px;height:1378px"></div>
<div class="ig2" style="left:735px;top:390px;height:144px"></div>
<div class="ig2" style="left:735px;top:642px;height:108px"></div>
<div class="ig2" style="left:735px;top:858px;height:108px"></div>
<div class="ig2" style="left:735px;top:1074px;height:108px"></div>
<div class="ig2" style="left:735px;top:1254px;height:108px"></div>
<div class="ig2" style="left:735px;top:1434px;height:108px"></div>
<!-- lightbulb -->
<svg class="ic" style="left:709px;top:174px" width="18" height="22" viewBox="0 0 18 22">
 <path d="M9 1 C5 1 2 3.8 2 7.6 C2 10.2 3.3 11.8 4.8 13.4 L5.3 15.2 L12.7 15.2 L13.2 13.4 C14.7 11.8 16 10.2 16 7.6 C16 3.8 13 1 9 1 Z" fill="#ffcc00"/>
 <rect x="5.4" y="14" width="7.2" height="7" fill="#ffcc00"/>
 <rect x="8" y="16.5" width="2" height="2.6" fill="#1f1f1f"/>
</svg>
<!-- red highlight box -->
<div class="abs" style="left:43px;top:927.4px;width:563px;height:44.2px;border:5.4px solid #fe2015;border-radius:7px"></div>

</body></html>
